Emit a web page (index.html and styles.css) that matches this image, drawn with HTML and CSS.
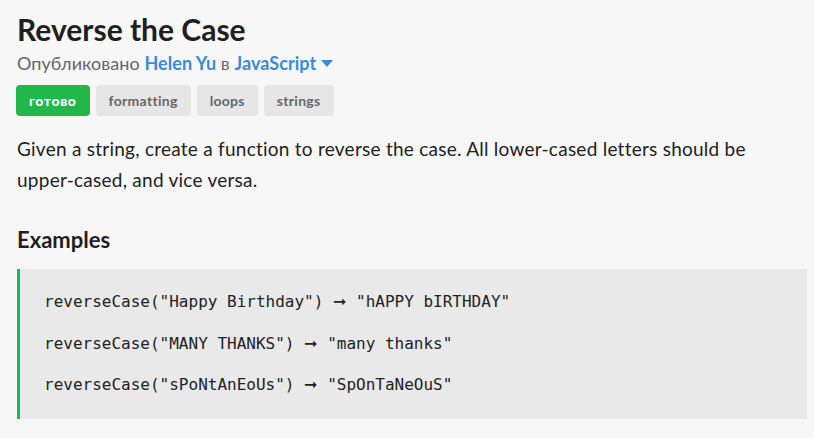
FILE: index.html
```html
<!DOCTYPE html>
<html>
<head>
<meta charset="utf-8">
<link rel="stylesheet" href="styles.css">
</head>
<body>
<main class="page">
  <h1 class="title">Reverse the Case</h1>
  <div class="meta">Опубликовано <a class="link">Helen Yu</a> в <a class="link">JavaScript</a><svg class="caret" width="12" height="8" viewBox="0 0 12 8"><path d="M0 0 H12 L6 7 Z" fill="#3a8ad6"/></svg></div>
  <div class="tags">
    <span class="tag tag-done">готово</span>
    <span class="tag">formatting</span>
    <span class="tag">loops</span>
    <span class="tag">strings</span>
  </div>
  <p class="desc">Given a string, create a function to reverse the case. All lower-cased letters should be upper-cased, and vice versa.</p>
  <h2 class="subhead">Examples</h2>
  <div class="code">
    <div class="line">reverseCase("Happy Birthday") <span class="arrow">➞</span> "hAPPY bIRTHDAY"</div>
    <div class="line">reverseCase("MANY THANKS") <span class="arrow">➞</span> "many thanks"</div>
    <div class="line">reverseCase("sPoNtAnEoUs") <span class="arrow">➞</span> "SpOnTaNeOuS"</div>
  </div>
</main>
</body>
</html>
```
FILE: styles.css
```css
html, body {
  margin: 0;
  padding: 0;
  background: #f7f7f7;
}
.page {
  font-family: Lato, "Liberation Sans", sans-serif;
  color: #222;
  padding: 9px 7px 0 17px;
}
.title {
  font-size: 30px;
  font-weight: 700;
  margin: 0;
  line-height: 40px;
  color: #1f1f1f;
}
.meta {
  font-size: 18px;
  letter-spacing: 0.05px;
  color: #666;
  line-height: 28px;
  display: flex;
  align-items: center;
  white-space: pre;
}
.link {
  color: #3a8ad6;
  font-weight: 700;
}
.caret {
  margin-left: 5px;
  margin-top: 2px;
}
.tags {
  display: flex;
  gap: 6px;
  margin-top: 8px;
  margin-left: -1px;
}
.tag {
  background: #e6e6e6;
  color: #666;
  font-size: 14px;
  font-weight: 700;
  border-radius: 4px;
  height: 31px;
  line-height: 31px;
  padding: 0 13px;
  letter-spacing: 0.3px;
}
.tag-done {
  background: #21b84b;
  color: #fff;
  font-size: 14px;
  font-weight: 900;
  letter-spacing: 0.6px;
  padding: 0 13px;
}
.desc {
  font-size: 19px;
  letter-spacing: 0.25px;
  line-height: 31px;
  margin: 17px 0 0;
  color: #222;
}
.subhead {
  font-size: 22px;
  font-weight: 700;
  margin: 30px 0 0;
  line-height: 30px;
  color: #1f1f1f;
}
.code {
  margin: 14px 0 0 0;
  background: #e9e9e9;
  border-left: 3px solid #21b84b;
  padding: 12px 0 13px 24px;
  font-family: "DejaVu Sans Mono", "Liberation Mono", monospace;
  font-size: 16px;
  color: #222;
}
.line {
  line-height: 41.5px;
}
.arrow {
  font-family: "DejaVu Sans", sans-serif;
  font-weight: 700;
}
```
